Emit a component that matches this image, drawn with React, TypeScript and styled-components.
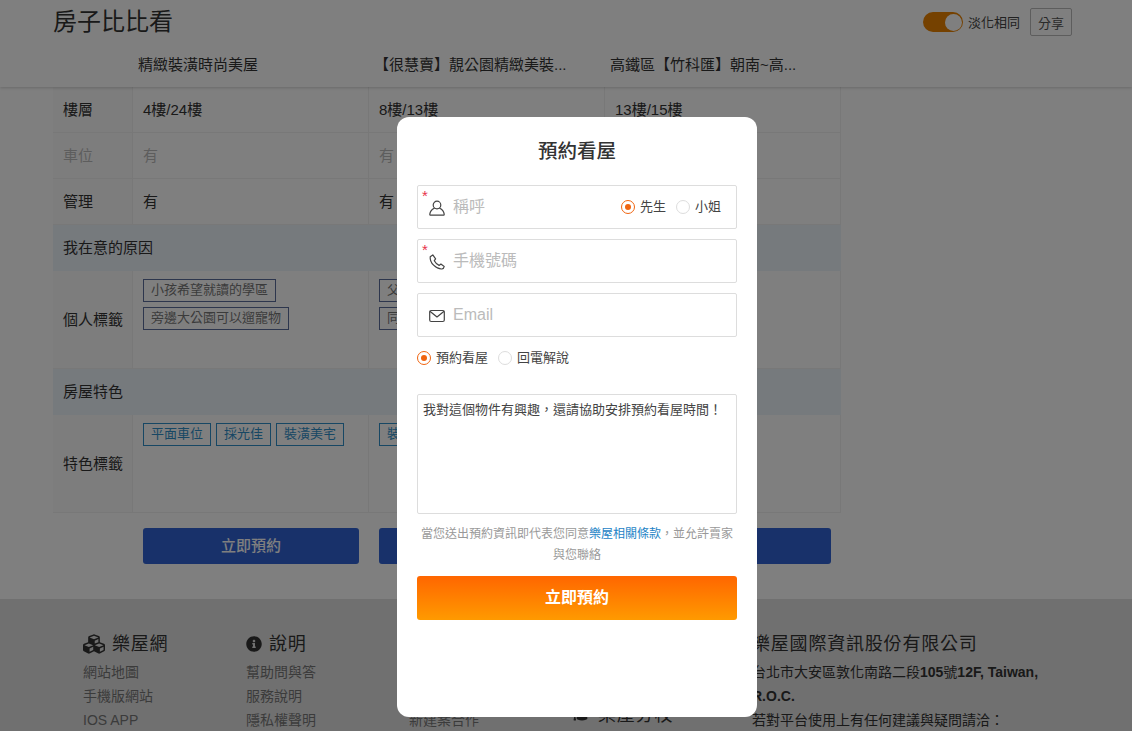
import React from 'react';
import styled, { createGlobalStyle } from 'styled-components';
import { FaCubes, FaGraduationCap, FaInfoCircle } from 'react-icons/fa';

const GlobalStyle = createGlobalStyle`
  html, body {
    margin: 0;
    padding: 0;
    height: 731px;
    overflow: hidden;
    background: #fff;
    font-family: "Liberation Sans", "Noto Sans CJK TC", sans-serif;
    color: #333;
  }
  * {
    box-sizing: border-box;
  }
`;

const Page = styled.div`
  position: relative;
  width: 1132px;
  height: 731px;
  overflow: hidden;
`;

const Header = styled.header`
  height: 87px;
  background: #fff;
  box-shadow: 0 1px 3px rgba(0, 0, 0, 0.18);
  position: relative;
  z-index: 1;
`;

const TopBar = styled.div`
  height: 42px;
  margin-left: 53px;
  width: 1019px;
  display: flex;
  align-items: center;
  justify-content: space-between;
  padding-top: 2px;
`;

const PageTitle = styled.h1`
  margin: 0;
  font-size: 24px;
  line-height: 32px;
  font-weight: 400;
  color: #333;
`;

const TopActions = styled.div`
  display: flex;
  align-items: center;
`;

const Toggle = styled.span`
  width: 40px;
  height: 20px;
  border-radius: 10px;
  background: #ea8200;
  position: relative;
  margin-right: 5px;

  &::after {
    content: '';
    position: absolute;
    right: 1px;
    top: 1.5px;
    width: 17px;
    height: 17px;
    border-radius: 50%;
    background: #fff;
  }
`;

const ToggleLabel = styled.span`
  font-size: 13px;
  color: #444;
  margin-right: 10px;
  margin-top: -2px;
`;

const ShareButton = styled.button`
  width: 42px;
  height: 28px;
  border: 1px solid #bbb;
  border-radius: 2px;
  background: #fff;
  color: #555;
  font: inherit;
  font-size: 13px;
  padding: 0;
`;

const TitleRow = styled.div`
  display: grid;
  grid-template-columns: repeat(3, 236px);
  margin-left: 133px;
  padding-top: 5px;
`;

const HouseTitle = styled.div`
  font-size: 15px;
  line-height: 36px;
  padding: 0 5px;
  color: #333;
  white-space: nowrap;
`;

const Table = styled.div`
  width: 788px;
  margin-left: 53px;
  display: grid;
  grid-template-columns: 80px repeat(3, 236px);
`;

const LabelCell = styled.div<{ $h: number; $faded?: boolean }>`
  height: ${(p) => p.$h}px;
  display: flex;
  align-items: center;
  padding: 0 0 3px 10px;
  font-size: 15px;
  background: #fafafa;
  border-bottom: 1px solid #f0f0f0;
  border-right: 1px solid #f0f0f0;
  color: ${(p) => (p.$faded ? '#bbb' : '#333')};
`;

const ValueCell = styled.div<{ $faded?: boolean }>`
  display: flex;
  align-items: center;
  padding: 0 0 3px 10px;
  font-size: 15px;
  background: #fff;
  border-bottom: 1px solid #f0f0f0;
  border-right: 1px solid #f0f0f0;
  color: ${(p) => (p.$faded ? '#bbb' : '#333')};
`;

const SectionRow = styled.div`
  grid-column: 1 / -1;
  height: 46px;
  background: #edf4fb;
  display: flex;
  align-items: center;
  padding: 0 0 3px 10px;
  font-size: 15px;
  font-weight: 400;
  color: #333;
`;

const TagCell = styled.div`
  padding: 8px 10px 0;
  background: #fff;
  border-bottom: 1px solid #f0f0f0;
  border-right: 1px solid #f0f0f0;
  display: flex;
  flex-wrap: wrap;
  align-content: flex-start;
  gap: 5px;
`;

const Tag = styled.span<{ $blue?: boolean }>`
  height: 23px;
  line-height: 20px;
  padding: 0 7px;
  font-size: 13px;
  white-space: nowrap;
  border: 1px solid ${(p) => (p.$blue ? '#2f8fc9' : '#5a6d9a')};
  color: ${(p) => (p.$blue ? '#2f8fc9' : '#777')};
`;

const Actions = styled.div`
  display: grid;
  grid-template-columns: repeat(3, 216px);
  gap: 20px;
  margin: 15px 0 35px 143px;
`;

const BookButton = styled.button`
  height: 36px;
  border: 0;
  border-radius: 3px;
  background: #3063d4;
  color: #fff;
  font: inherit;
  font-size: 15px;
  font-weight: 500;
  padding: 0 0 3px;
`;

const Footer = styled.footer`
  background: #e0e0e0;
  height: 140px;
  padding: 33px 0 0 83px;
  display: grid;
  grid-template-columns: 163px 163px 163px 180px 310px;
`;

const FooterCol = styled.div`
  display: flex;
  flex-direction: column;
`;

const FooterHeading = styled.h3<{ $low?: boolean }>`
  margin: ${(p) => (p.$low ? '71px 0 0 1px' : '0 0 4px')};
  height: 24px;
  display: flex;
  align-items: center;
  gap: 7px;
  font-size: 18px;
  line-height: 24px;
  font-weight: 400;
  letter-spacing: 0.8px;
  color: #333;
  white-space: nowrap;
`;

const FooterLink = styled.a`
  font-size: 14px;
  line-height: 24px;
  color: #777;
`;

const CompanyLine = styled.div`
  font-size: 14px;
  line-height: 24px;
  color: #333;
  width: 290px;

  b {
    font-weight: 700;
  }
`;

const Overlay = styled.div`
  position: absolute;
  inset: 0;
  z-index: 5;
  background: rgba(0, 0, 0, 0.5);
`;

const Modal = styled.div`
  position: absolute;
  left: 397px;
  top: 117px;
  width: 360px;
  height: 600px;
  border-radius: 12px;
  background: #fff;
  padding: 20px;
`;

const ModalTitle = styled.h2`
  margin: 1px 0 20px;
  text-align: center;
  font-size: 19.5px;
  line-height: 27px;
  font-weight: 500;
  color: #333;
`;

const Field = styled.div`
  position: relative;
  height: 44px;
  border: 1px solid #ddd;
  border-radius: 2px;
  margin-bottom: 10px;
  display: flex;
  align-items: center;
  padding: 0 15px 0 11px;
`;

const Required = styled.span`
  position: absolute;
  left: 4px;
  top: 3px;
  font-size: 15px;
  line-height: 14px;
  color: #e8334a;
`;

const FieldIcon = styled.svg`
  width: 16px;
  height: 16px;
  flex: none;
  margin-top: 1px;
  fill: none;
  stroke: #444;
  stroke-width: 1.2;
  stroke-linecap: round;
  stroke-linejoin: round;
`;

const Placeholder = styled.span<{ $cjk?: boolean }>`
  margin-left: 8px;
  padding-bottom: ${(p) => (p.$cjk ? '4px' : '0')};
  font-size: 16px;
  color: #bbb;
  flex: 1;
`;

const RadioGroup = styled.div`
  display: flex;
  align-items: center;
`;

const RadioDot = styled.span<{ $on?: boolean }>`
  width: 14px;
  height: 14px;
  border-radius: 50%;
  border: 1px solid ${(p) => (p.$on ? '#f0640f' : '#ddd')};
  margin-right: 5px;
  display: flex;
  align-items: center;
  justify-content: center;

  &::after {
    content: '';
    width: 6px;
    height: 6px;
    border-radius: 50%;
    background: ${(p) => (p.$on ? '#f0640f' : 'transparent')};
  }
`;

const RadioLabel = styled.span`
  font-size: 13px;
  line-height: 18px;
  color: #444;
  margin-right: 10px;

  &:last-child {
    margin-right: 0;
  }
`;

const ContactType = styled(RadioGroup)`
  height: 22px;
  margin-bottom: 25px;
`;

const MessageBox = styled.textarea`
  display: block;
  width: 100%;
  height: 120px;
  border: 1px solid #ddd;
  border-radius: 2px;
  padding: 6px 5px;
  margin: 0;
  resize: none;
  outline: none;
  font: inherit;
  font-size: 13px;
  line-height: 18px;
  color: #444;
`;

const Terms = styled.p`
  margin: 10px 0 10px;
  text-align: center;
  font-size: 12px;
  line-height: 21px;
  color: #999;
`;

const TermsLink = styled.a`
  color: #1d83c6;
`;

const SubmitButton = styled.button`
  display: block;
  width: 100%;
  height: 44px;
  border: 0;
  border-radius: 3px;
  background: linear-gradient(#ff6600, #ff9a00);
  color: #fff;
  font: inherit;
  font-size: 16px;
  font-weight: 700;
  padding: 0 0 4px;
`;

const truncateTitle = (title: string) =>
  title.length > 12 ? title.slice(0, 12) + '...' : title;

const houses = [
  {
    title: '精緻裝潢時尚美屋',
    floor: '4樓/24樓',
    personal: ['小孩希望就讀的學區', '旁邊大公園可以遛寵物'],
    features: ['平面車位', '採光佳', '裝潢美宅'],
  },
  {
    title: '【很慧賣】靚公園精緻美裝潢大樓',
    floor: '8樓/13樓',
    personal: ['父母希望住得近一點的', '同事推薦這裡的好社區'],
    features: ['裝潢美宅'],
  },
  {
    title: '高鐵區【竹科匯】朝南~高樓層景觀',
    floor: '13樓/15樓',
    personal: [],
    features: [],
  },
];

const App = () => {
  return (
    <Page>
      <GlobalStyle />
      <Header>
        <TopBar>
          <PageTitle>房子比比看</PageTitle>
          <TopActions>
            <Toggle />
            <ToggleLabel>淡化相同</ToggleLabel>
            <ShareButton>分享</ShareButton>
          </TopActions>
        </TopBar>
        <TitleRow>
          {houses.map((h) => (
            <HouseTitle key={h.title}>{truncateTitle(h.title)}</HouseTitle>
          ))}
        </TitleRow>
      </Header>

      <Table>
        <LabelCell $h={46}>樓層</LabelCell>
        {houses.map((h) => (
          <ValueCell key={h.title}>{h.floor}</ValueCell>
        ))}
        <LabelCell $h={46} $faded>
          車位
        </LabelCell>
        {houses.map((h) => (
          <ValueCell key={h.title} $faded>
            有
          </ValueCell>
        ))}
        <LabelCell $h={46}>管理</LabelCell>
        {houses.map((h) => (
          <ValueCell key={h.title}>有</ValueCell>
        ))}
        <SectionRow>我在意的原因</SectionRow>
        <LabelCell $h={98}>個人標籤</LabelCell>
        {houses.map((h) => (
          <TagCell key={h.title}>
            {h.personal.map((t) => (
              <Tag key={t}>{t}</Tag>
            ))}
          </TagCell>
        ))}
        <SectionRow>房屋特色</SectionRow>
        <LabelCell $h={98}>特色標籤</LabelCell>
        {houses.map((h) => (
          <TagCell key={h.title}>
            {h.features.map((t) => (
              <Tag key={t} $blue>
                {t}
              </Tag>
            ))}
          </TagCell>
        ))}
      </Table>

      <Actions>
        {houses.map((h) => (
          <BookButton key={h.title}>立即預約</BookButton>
        ))}
      </Actions>

      <Footer>
        <FooterCol>
          <FooterHeading>
            <FaCubes size={22} />
            樂屋網
          </FooterHeading>
          <FooterLink>網站地圖</FooterLink>
          <FooterLink>手機版網站</FooterLink>
          <FooterLink>IOS APP</FooterLink>
        </FooterCol>
        <FooterCol>
          <FooterHeading>
            <FaInfoCircle size={16} />
            說明
          </FooterHeading>
          <FooterLink>幫助問與答</FooterLink>
          <FooterLink>服務說明</FooterLink>
          <FooterLink>隱私權聲明</FooterLink>
        </FooterCol>
        <FooterCol>
          <FooterHeading>合作</FooterHeading>
          <FooterLink>廣告刊登</FooterLink>
          <FooterLink>房仲合作</FooterLink>
          <FooterLink>新建案合作</FooterLink>
        </FooterCol>
        <FooterCol>
          <FooterHeading $low>
            <FaGraduationCap size={18} />
            樂屋分校
          </FooterHeading>
        </FooterCol>
        <FooterCol>
          <FooterHeading>樂屋國際資訊股份有限公司</FooterHeading>
          <CompanyLine>
            台北市大安區敦化南路二段<b>105</b>號<b>12F, Taiwan, R.O.C.</b>
          </CompanyLine>
          <CompanyLine>若對平台使用上有任何建議與疑問請洽：</CompanyLine>
        </FooterCol>
      </Footer>

      <Overlay>
        <Modal>
          <ModalTitle>預約看屋</ModalTitle>
          <Field>
            <Required>*</Required>
            <FieldIcon viewBox="0 0 16 16">
              <circle cx="8" cy="5" r="3.8" />
              <path d="M5.300 8.300C3 9.300 1.200 11.300.8 14.200c-.1.700.3 1 .9 1h12.600c.6 0 1-.3.9-1-.4-2.900-2.200-4.900-4.500-5.900" />
            </FieldIcon>
            <Placeholder $cjk>稱呼</Placeholder>
            <RadioGroup>
              <RadioDot $on />
              <RadioLabel>先生</RadioLabel>
              <RadioDot />
              <RadioLabel>小姐</RadioLabel>
            </RadioGroup>
          </Field>
          <Field>
            <Required>*</Required>
            <FieldIcon viewBox="0 0 16 16">
              <path d="M3.800.9 1.200 2.700C.9 6 2.400 9 4.600 11.200c2.300 2.300 5.300 4 8.300 3.800 1.300-.3 2.100-1.200 2.300-2.600l-3.300-2.300-1.800 1.300C8.300 10.500 6.300 8.600 5.300 6.700l1.300-1.900z" />
            </FieldIcon>
            <Placeholder $cjk>手機號碼</Placeholder>
          </Field>
          <Field>
            <FieldIcon viewBox="0 0 16 16">
              <rect x="0.700" y="2.500" width="14.600" height="11" rx="1.500" />
              <path d="M1.200 3.500 8 9l6.800-5.500" />
            </FieldIcon>
            <Placeholder>Email</Placeholder>
          </Field>
          <ContactType>
            <RadioDot $on />
            <RadioLabel>預約看屋</RadioLabel>
            <RadioDot />
            <RadioLabel>回電解說</RadioLabel>
          </ContactType>
          <MessageBox defaultValue="我對這個物件有興趣，還請協助安排預約看屋時間！" />
          <Terms>
            當您送出預約資訊即代表您同意<TermsLink>樂屋相關條款</TermsLink>，並允許賣家與您聯絡
          </Terms>
          <SubmitButton>立即預約</SubmitButton>
        </Modal>
      </Overlay>
    </Page>
  );
};

export default App;
